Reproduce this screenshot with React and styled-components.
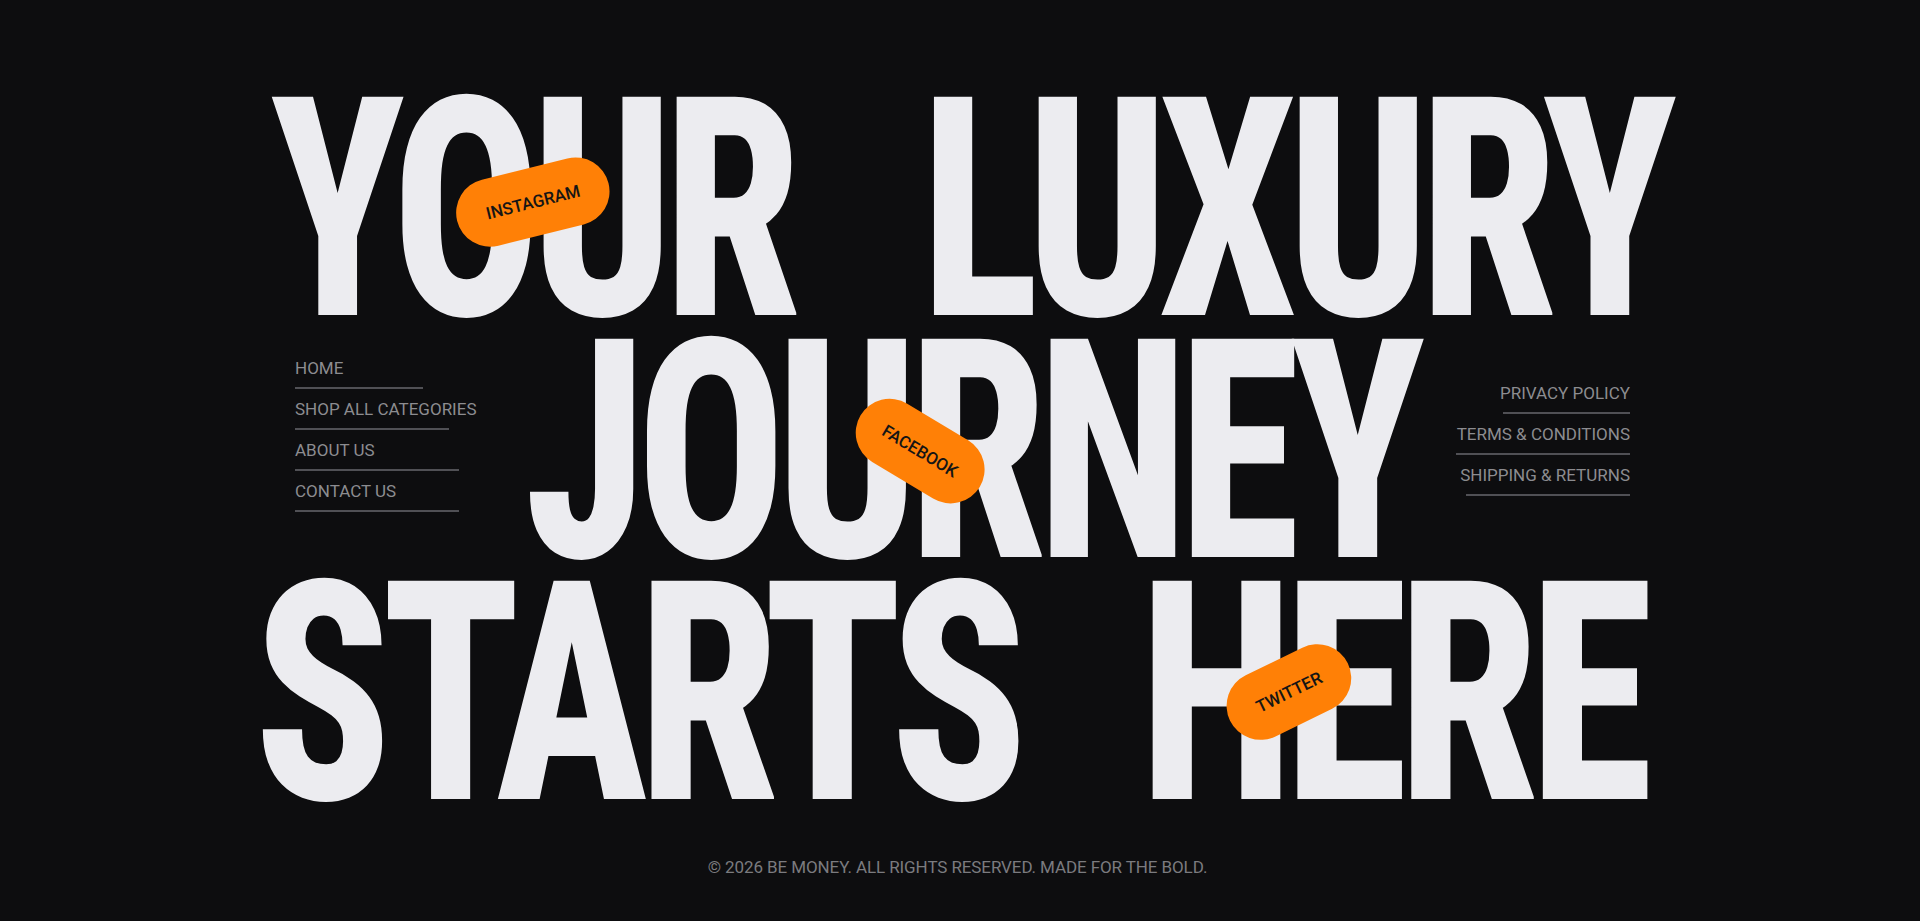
import React from "react";
import styled, { createGlobalStyle } from "styled-components";

const GlobalStyle = createGlobalStyle`
  html, body {
    margin: 0;
    padding: 0;
    background: #0d0d0f;
  }
  body {
    font-family: Roboto, "Liberation Sans", sans-serif;
    -webkit-font-smoothing: antialiased;
  }
  * { box-sizing: border-box; }
`;

const Page = styled.main`
  position: relative;
  min-height: 921px;
  padding-top: 90px;
  display: flex;
  flex-direction: column;
  overflow: hidden;
  background: #0d0d0f;
`;

const Headline = styled.h1`
  margin: 0;
  font-weight: inherit;
  display: flex;
  flex-direction: column;
`;

const Line = styled.div`
  height: 242px;
  text-align: center;
  padding-left: ${(p) => (p.$shift > 0 ? 2 * p.$shift : 0)}px;
  padding-right: ${(p) => (p.$shift < 0 ? -2 * p.$shift : 0)}px;
`;

const Words = styled.span`
  display: inline-block;
  font-family: Roboto, "Liberation Sans", sans-serif;
  font-weight: 800;
  font-stretch: 75%;
  font-size: 257px;
  line-height: 242px;
  letter-spacing: -10px;
  word-spacing: ${(p) => p.$ws || 64}px;
  color: #ececf0;
  white-space: nowrap;
  transform: scale(${(p) => p.$sx}, 1.195);
  margin-left: ${(p) => p.$ml || 0}px;
`;

const MiddleRow = styled.div`
  height: 242px;
  display: grid;
  grid-template-columns: 1fr auto 1fr;
  padding: 0 290px 0 295px;
`;

const NavList = styled.nav`
  display: flex;
  flex-direction: column;
  gap: 10px;
  align-items: ${(p) => (p.$right ? "flex-end" : "flex-start")};
  justify-self: ${(p) => (p.$right ? "end" : "start")};
  padding-top: ${(p) => p.$top}px;
`;

const NavLink = styled.a`
  display: flex;
  flex-direction: column;
  align-items: ${(p) => (p.$right ? "flex-end" : "flex-start")};
  gap: 9px;
  font: 400 17px/20px Roboto, "Liberation Sans", sans-serif;
  color: #8c8c90;
  text-decoration: none;
  white-space: nowrap;
  cursor: pointer;

  &::after {
    content: "";
    display: block;
    width: ${(p) => p.$line}px;
    height: 2px;
    background: #505055;
  }
`;

const Badge = styled.a`
  position: absolute;
  left: ${(p) => p.$x}px;
  top: ${(p) => p.$y}px;
  transform: translate(-50%, -50%) rotate(${(p) => p.$r}deg);
  height: 68px;
  padding: 0 ${(p) => p.$pad || 30}px;
  border-radius: 34px;
  background: #ff8006;
  display: flex;
  align-items: center;
  font: 500 17px/1 Roboto, "Liberation Sans", sans-serif;
  color: #151515;
  text-decoration: none;
  white-space: nowrap;
  cursor: pointer;
`;

const Footer = styled.footer`
  margin-top: 41px;
  padding-right: 5px;
  text-align: center;
  font: 400 17px/20px Roboto, "Liberation Sans", sans-serif;
  letter-spacing: -0.1px;
  color: #7b7b7f;
`;

const leftLinks = [
  { label: "HOME", line: 128 },
  { label: "SHOP ALL CATEGORIES", line: 154 },
  { label: "ABOUT US", line: 164 },
  { label: "CONTACT US", line: 164 },
];

const rightLinks = [
  { label: "PRIVACY POLICY", line: 127 },
  { label: "TERMS & CONDITIONS", line: 174 },
  { label: "SHIPPING & RETURNS", line: 164 },
];

const badges = [
  { label: "INSTAGRAM", x: 533, y: 202, r: -14, pad: 30 },
  { label: "FACEBOOK", x: 920, y: 451, r: 31, pad: 27 },
  { label: "TWITTER", x: 1289, y: 692, r: -26, pad: 30 },
];

export default function App() {
  return (
    <>
      <GlobalStyle />
      <Page>
        <Headline>
          <Line $shift={9}>
            <Words $sx={0.96} $ws={85}>YOUR LUXURY</Words>
          </Line>
          <MiddleRow>
            <NavList $top={26}>
              {leftLinks.map((l) => (
                <NavLink key={l.label} $line={l.line}>
                  {l.label}
                </NavLink>
              ))}
            </NavList>
            <Words $sx={0.962} $ml={15}>JOURNEY</Words>
            <NavList $right $top={51}>
              {rightLinks.map((l) => (
                <NavLink key={l.label} $right $line={l.line}>
                  {l.label}
                </NavLink>
              ))}
            </NavList>
          </MiddleRow>
          <Line $shift={-11}>
            <Words $sx={0.983} $ws={74}>STARTS HERE</Words>
          </Line>
        </Headline>
        <Footer>© 2026 BE MONEY. ALL RIGHTS RESERVED. MADE FOR THE BOLD.</Footer>
        {badges.map((b) => (
          <Badge key={b.label} $x={b.x} $y={b.y} $r={b.r} $pad={b.pad}>
            {b.label}
          </Badge>
        ))}
      </Page>
    </>
  );
}
